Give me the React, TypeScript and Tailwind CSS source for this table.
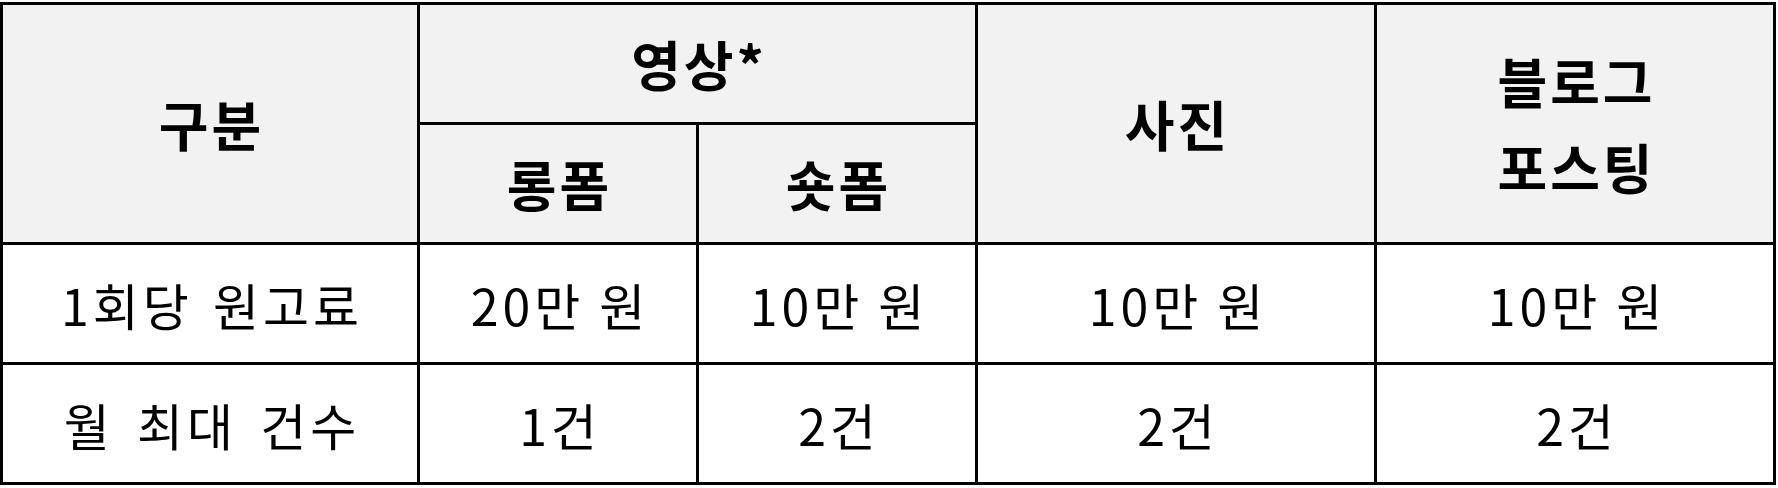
import React from "react";

const head = "bg-[#f2f2f2] flex items-center justify-center text-center font-bold text-black text-[54px] tracking-[3px] pl-[3px]";
const body = "bg-white flex items-center justify-center text-center font-normal text-black text-[50px] tracking-[4px] pl-[4px]";

export default function App() {
  return (
    <div className="w-[1778px] h-[488px] bg-white pt-[2px] font-['Noto_Sans_CJK_KR','Noto_Sans_CJK_SC',sans-serif] leading-none">
      <div className="w-[1776px] bg-black p-[3px] grid grid-cols-[414px_276px_276px_396px_396px] grid-rows-[117px_117px_117px_117px] gap-[3px]">
        <div className={`${head} row-span-2`}>구분</div>
        <div className={`${head} col-span-2`}>영상*</div>
        <div className={`${head} row-span-2`}>사진</div>
        <div className={`${head} row-span-2 flex-col gap-[32px]`}>
          <span>블로그</span>
          <span>포스팅</span>
        </div>
        <div className={head}>롱폼</div>
        <div className={head}>숏폼</div>

        <div className={`${body} [word-spacing:5px]`}>1회당 원고료</div>
        <div className={body}>20만 원</div>
        <div className={body}>10만 원</div>
        <div className={body}>10만 원</div>
        <div className={body}>10만 원</div>

        <div className={`${body} [word-spacing:8px]`}>월 최대 건수</div>
        <div className={body}>1건</div>
        <div className={body}>2건</div>
        <div className={body}>2건</div>
        <div className={body}>2건</div>
      </div>
    </div>
  );
}
